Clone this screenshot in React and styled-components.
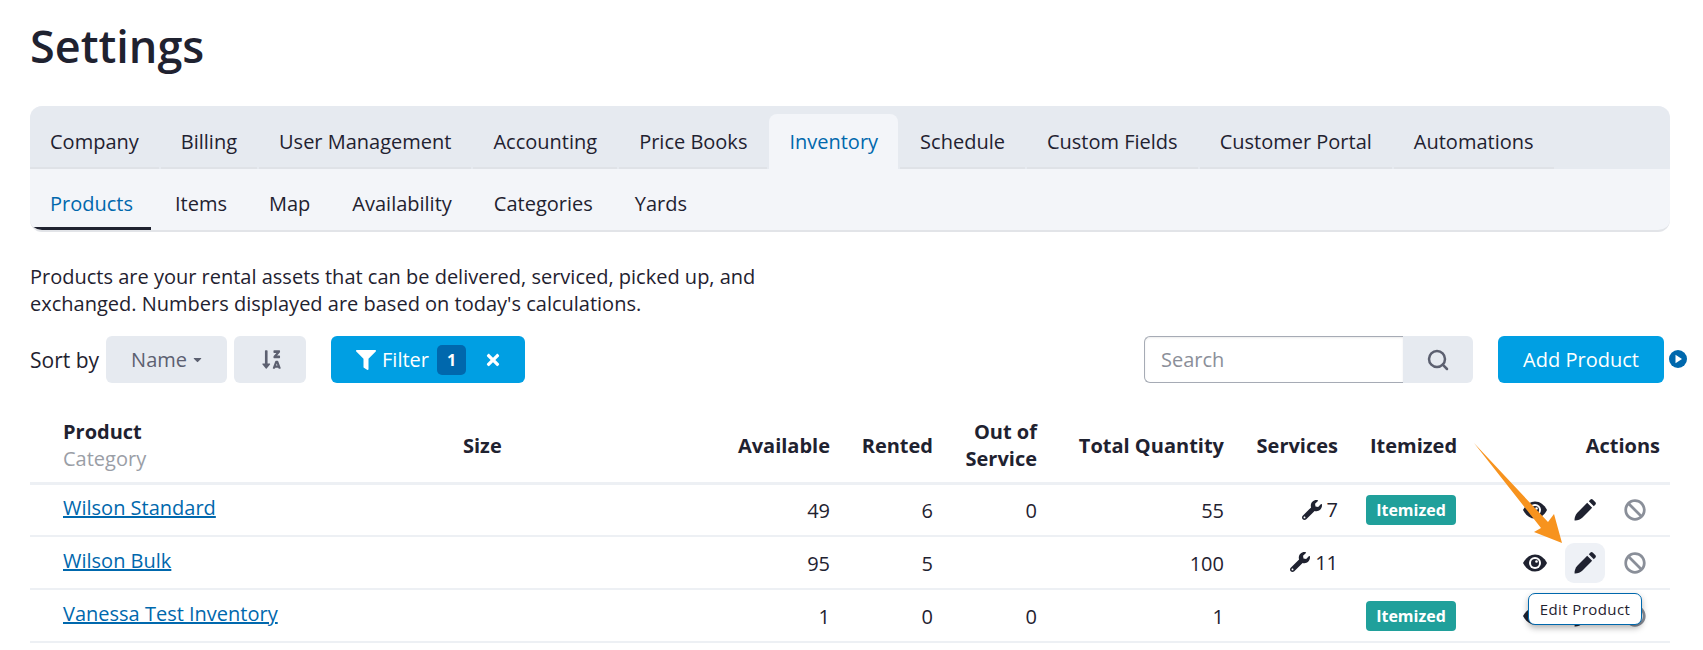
import React from 'react';
import styled, { createGlobalStyle } from 'styled-components';
import { FaWrench, FaBan, FaFilter, FaTimes, FaSortAlphaDownAlt, FaCaretDown } from 'react-icons/fa';
import { LuSearch } from 'react-icons/lu';

const GlobalStyle = createGlobalStyle`
  html, body {
    margin: 0;
    background: #fff;
    color: #1f2230;
    font-family: 'Open Sans', 'Noto Sans', sans-serif;
  }
  * { box-sizing: border-box; }
`;

const Page = styled.div`
  position: relative;
  width: 1703px;
  height: 650px;
  overflow: hidden;
  padding: 12px 33px 0 30px;
`;

const Title = styled.h1`
  margin: 0 0 27px;
  font-size: 45px;
  line-height: 67px;
  font-weight: 600;
  color: #1f2230;
`;

const TabCard = styled.nav`
  border-radius: 12px;
  overflow: hidden;
  background: #f3f5f9;
  border-bottom: 2px solid #e2e4e8;
`;

const MainTabs = styled.div`
  display: flex;
  align-items: flex-end;
  height: 63px;
  background: #e6eaf0;
  padding-top: 8px;
  gap: 2px;
`;

const MainTab = styled.a`
  height: 55px;
  display: flex;
  align-items: center;
  padding: 2px 20px 0;
  font-size: 20px;
  color: ${({ $active }) => ($active ? '#0068ad' : '#1f2230')};
  background: ${({ $active }) => ($active ? '#f3f5f9' : 'transparent')};
  border-radius: 8px 8px 0 0;
  border-bottom: 2px solid ${({ $active }) => ($active ? '#f3f5f9' : '#dfe2e7')};
`;

const SubTabs = styled.div`
  display: flex;
  gap: 2px;
  height: 61px;
`;

const SubTab = styled.a`
  display: flex;
  align-items: center;
  padding: 7px ${({ $active }) => ($active ? 18 : 20)}px 0 20px;
  margin-right: ${({ $active }) => ($active ? 2 : 0)}px;
  font-size: 20px;
  color: ${({ $active }) => ($active ? '#0068ad' : '#1f2230')};
  box-shadow: ${({ $active }) => ($active ? 'inset 0 -3px 0 #1f2230' : 'none')};
`;

const Intro = styled.p`
  margin: 31px 0 0;
  width: 760px;
  font-size: 20px;
  line-height: 27px;
  color: #1f2230;
`;

const Toolbar = styled.div`
  display: flex;
  align-items: stretch;
  height: 47px;
  margin: 19px 6px 0 0;
`;

const SortLabel = styled.span`
  align-self: center;
  font-size: 21px;
  margin-right: 7px;
`;

const GreyButton = styled.button`
  display: flex;
  align-items: center;
  justify-content: center;
  gap: 4px;
  width: ${({ $w }) => $w}px;
  margin-right: ${({ $mr }) => $mr || 0}px;
  padding: 0 0 0 2px;
  border: 0;
  border-radius: 6px;
  background: #e6eaf0;
  color: #5c6070;
  font: inherit;
  font-size: 20px;
`;

const FilterButton = styled.button`
  display: flex;
  align-items: center;
  width: 194px;
  padding: 0 0 0 25px;
  border: 0;
  border-radius: 6px;
  background: #009fe3;
  color: #fff;
  font: inherit;
  font-size: 20px;
`;

const FilterBadge = styled.span`
  display: flex;
  align-items: center;
  justify-content: center;
  width: 29px;
  height: 30px;
  margin: 0 18px 0 8px;
  border-radius: 5px;
  background: #0068ad;
  font-size: 16px;
  font-weight: 700;
`;

const SearchGroup = styled.div`
  display: flex;
  margin-left: auto;
`;

const SearchInput = styled.input`
  width: 259px;
  padding: 0 16px;
  border: 1px solid #a6abb5;
  border-right: 0;
  border-radius: 6px 0 0 6px;
  font: inherit;
  font-size: 20px;
  outline: none;
  box-shadow: inset 0 1px 2px rgba(0, 0, 0, 0.08);
  &::placeholder { color: #8b8f99; opacity: 1; }
`;

const SearchButton = styled.button`
  display: flex;
  align-items: center;
  justify-content: center;
  width: 70px;
  padding: 0;
  border: 0;
  border-radius: 0 6px 6px 0;
  background: #e6eaf0;
  color: #5c6070;
`;

const AddButton = styled.button`
  position: relative;
  width: 166px;
  margin-left: 25px;
  padding: 0;
  border: 0;
  border-radius: 6px;
  background: #009fe3;
  color: #fff;
  font: inherit;
  font-size: 20px;
`;

const PlayBadge = styled.svg`
  position: absolute;
  left: 171px;
  top: 14px;
`;

const Table = styled.table`
  width: 1640px;
  margin-top: 16px;
  border-collapse: collapse;
  table-layout: fixed;
`;

const HeadCell = styled.th`
  height: 84px;
  padding: 10px 10px 0;
  font-size: 20px;
  line-height: 27px;
  font-weight: 700;
  color: #1f2230;
  text-align: ${({ $left }) => ($left ? 'left' : 'right')};
  border-bottom: 3px solid #edf0f4;
  ${({ $first }) => $first && 'padding-left: 33px;'}
  ${({ $services }) => $services && 'padding-right: 18px;'}
  ${({ $itemized }) => $itemized && 'padding-left: 14px;'}
`;

const CategoryLabel = styled.div`
  font-weight: 400;
  color: #9a9ea6;
`;

const Cell = styled.td`
  height: 53px;
  padding: ${({ $num }) => ($num ? 2 : 0)}px 10px 0;
  font-size: 20px;
  color: #1f2230;
  text-align: ${({ $left }) => ($left ? 'left' : 'right')};
  border-bottom: 2px solid #edf0f4;
  ${({ $first }) => $first && 'padding-left: 33px;'}
  ${({ $services }) => $services && 'padding-right: 18px;'}
`;

const ProductLink = styled.a`
  position: relative;
  top: -2px;
  color: #0068ad;
  font-size: 20px;
  text-decoration: underline;
`;

const ServiceCount = styled.span`
  display: inline-flex;
  align-items: center;
  gap: 5px;
`;

const ItemizedBadge = styled.span`
  display: inline-flex;
  align-items: center;
  justify-content: center;
  width: 90px;
  height: 30px;
  border-radius: 4px;
  background: #20a09b;
  color: #fff;
  font-size: 16px;
  font-weight: 700;
  vertical-align: middle;
`;

const ActionRow = styled.div`
  display: flex;
  justify-content: flex-end;
  gap: 10px;
  margin-right: 5px;
`;

const ActionButton = styled.span`
  position: relative;
  z-index: ${({ $hover }) => ($hover ? 2 : 'auto')};
  display: flex;
  align-items: center;
  justify-content: center;
  width: 40px;
  height: 40px;
  border-radius: 9px;
  color: ${({ $muted }) => ($muted ? '#8a8f99' : '#1f2230')};
  background: ${({ $hover }) => ($hover ? '#eef1f6' : 'transparent')};
`;

const Tooltip = styled.div`
  position: absolute;
  top: 50px;
  left: -37px;
  width: 114px;
  height: 32px;
  display: flex;
  align-items: center;
  justify-content: center;
  background: #fff;
  border: 1px solid #0068ad;
  border-radius: 7px;
  box-shadow: 0 3px 6px rgba(0, 0, 0, 0.3);
  font-size: 15px;
  letter-spacing: 0.4px;
  color: #1f2230;
  white-space: nowrap;
`;

const Arrow = styled.svg`
  position: absolute;
  z-index: 3;
  left: 1470px;
  top: 438px;
  pointer-events: none;
`;

const EyeIcon = () => (
  <svg width="24" height="18" viewBox="0 0 24 18">
    <path d="M0 9C3 3.5 7 .5 12 .5S21 3.5 24 9c-3 5.500-7 8.500-12 8.500S3 14.500 0 9Z" fill="currentColor" />
    <circle cx="12" cy="9" r="6" fill="#fff" />
    <circle cx="12" cy="9" r="4" fill="currentColor" />
    <circle cx="13.500" cy="7.500" r="1.300" fill="#fff" />
  </svg>
);

const PenIcon = () => (
  <svg width="22" height="22" viewBox="0 0 20 20">
    <path d="M.5 19.500C.3 17 1.500 14 3 12.500l9-9L16.500 8l-9 9c-1.500 1.500-4.500 2.700-7 2.500Z" fill="currentColor" />
    <path d="M13.500 2 15 .5q1-.8 2 0L19.500 3q.8 1 0 2L18 6.500Z" fill="currentColor" />
  </svg>
);

const mainTabs = ['Company', 'Billing', 'User Management', 'Accounting', 'Price Books', 'Inventory', 'Schedule', 'Custom Fields', 'Customer Portal', 'Automations'];
const subTabs = ['Products', 'Items', 'Map', 'Availability', 'Categories', 'Yards'];
const products = [
  { name: 'Wilson Standard', available: 49, rented: 6, out: 0, total: 55, services: 7, itemized: true },
  { name: 'Wilson Bulk', available: 95, rented: 5, out: '', total: 100, services: 11, itemized: false, hover: true },
  { name: 'Vanessa Test Inventory', available: 1, rented: 0, out: 0, total: 1, services: null, itemized: true },
];

const App = () => (
  <Page>
    <GlobalStyle />
    <Title>Settings</Title>
    <TabCard>
      <MainTabs>
        {mainTabs.map(t => (
          <MainTab key={t} $active={t === 'Inventory'}>{t}</MainTab>
        ))}
      </MainTabs>
      <SubTabs>
        {subTabs.map(t => (
          <SubTab key={t} $active={t === 'Products'}>{t}</SubTab>
        ))}
      </SubTabs>
    </TabCard>
    <Intro>
      Products are your rental assets that can be delivered, serviced, picked up, and exchanged. Numbers displayed are based on today's calculations.
    </Intro>
    <Toolbar>
      <SortLabel>Sort by</SortLabel>
      <GreyButton $w={121} $mr={7}>Name <FaCaretDown size={13} /></GreyButton>
      <GreyButton $w={72} $mr={25}><FaSortAlphaDownAlt size={21} /></GreyButton>
      <FilterButton>
        <FaFilter size={20} style={{ marginRight: 6 }} />Filter
        <FilterBadge>1</FilterBadge>
        <FaTimes size={18} />
      </FilterButton>
      <SearchGroup>
        <SearchInput placeholder="Search" />
        <SearchButton><LuSearch size={24} strokeWidth={2.5} /></SearchButton>
      </SearchGroup>
      <AddButton>
        Add Product
        <PlayBadge width="18" height="18" viewBox="0 0 18 18">
          <circle cx="9" cy="9" r="9" fill="#0068ad" />
          <path d="M6.500 4.800 L13 9 L6.500 13.200 Z" fill="#fff" />
        </PlayBadge>
      </AddButton>
    </Toolbar>
    <Table>
      <colgroup>
        <col style={{ width: 423 }} />
        <col style={{ width: 247 }} />
        <col style={{ width: 140 }} />
        <col style={{ width: 103 }} />
        <col style={{ width: 104 }} />
        <col style={{ width: 187 }} />
        <col style={{ width: 122 }} />
        <col style={{ width: 110 }} />
        <col style={{ width: 204 }} />
      </colgroup>
      <thead>
        <tr>
          <HeadCell $left $first>Product<CategoryLabel>Category</CategoryLabel></HeadCell>
          <HeadCell $left>Size</HeadCell>
          <HeadCell>Available</HeadCell>
          <HeadCell>Rented</HeadCell>
          <HeadCell>Out of Service</HeadCell>
          <HeadCell>Total Quantity</HeadCell>
          <HeadCell $services>Services</HeadCell>
          <HeadCell $left $itemized>Itemized</HeadCell>
          <HeadCell>Actions</HeadCell>
        </tr>
      </thead>
      <tbody>
        {products.map(p => (
          <tr key={p.name}>
            <Cell $left $first><ProductLink>{p.name}</ProductLink></Cell>
            <Cell $left />
            <Cell $num>{p.available}</Cell>
            <Cell $num>{p.rented}</Cell>
            <Cell $num>{p.out}</Cell>
            <Cell $num>{p.total}</Cell>
            <Cell $num $services>
              {p.services !== null && (
                <ServiceCount><FaWrench size={20} />{p.services}</ServiceCount>
              )}
            </Cell>
            <Cell $left>{p.itemized && <ItemizedBadge>Itemized</ItemizedBadge>}</Cell>
            <Cell>
              <ActionRow>
                <ActionButton><EyeIcon /></ActionButton>
                <ActionButton $hover={p.hover}>
                  <PenIcon />
                  {p.hover && <Tooltip>Edit Product</Tooltip>}
                </ActionButton>
                <ActionButton $muted><FaBan size={22} /></ActionButton>
              </ActionRow>
            </Cell>
          </tr>
        ))}
      </tbody>
    </Table>
    <Arrow width="100" height="112" viewBox="0 0 100 112">
      <path d="M4 5 L78 84 L84 76 L92 105 L64 94 L71 90 Z" fill="#f7931e" />
    </Arrow>
  </Page>
);

export default App;
